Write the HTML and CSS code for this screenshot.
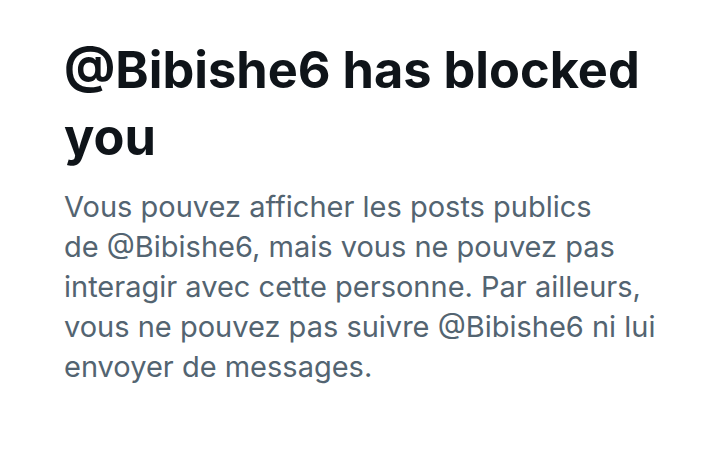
FILE: index.html
```html
<!DOCTYPE html>
<html lang="fr">
<head>
  <meta charset="UTF-8">
  <title>Blocked</title>
  <link rel="stylesheet" href="styles.css">
</head>
<body>
  <div class="blocked">
    <h1 class="blocked-title">@Bibishe6 has blocked you</h1>
    <p class="blocked-text">Vous pouvez afficher les posts publics de&nbsp;@Bibishe6, mais vous ne pouvez pas interagir avec cette personne. Par ailleurs, vous ne pouvez pas suivre @Bibishe6 ni lui envoyer de messages.</p>
  </div>
</body>
</html>
```

FILE: styles.css
```css
body {
  margin: 0;
  background: #fff;
  font-family: Inter, Roboto, "Liberation Sans", sans-serif;
}
.blocked {
  padding: 36px 52px 0 64px;
}
.blocked-title {
  margin: 0;
  font-size: 50.5px;
  line-height: 67px;
  font-weight: 700;
  color: #0f1419;
}
.blocked-text {
  margin: 17px 0 0 0;
  font-size: 29px;
  line-height: 40px;
  color: #536471;
}
```
